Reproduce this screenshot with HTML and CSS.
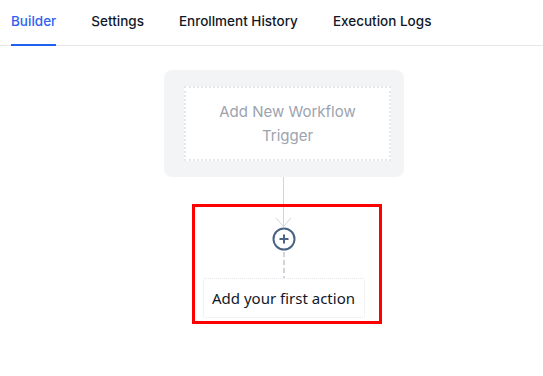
FILE: index.html
```html
<!DOCTYPE html>
<html>
<head>
<meta charset="utf-8">
<link rel="stylesheet" href="styles.css">
</head>
<body>
<nav class="tabs">
  <a class="tab active">Builder</a>
  <a class="tab">Settings</a>
  <a class="tab">Enrollment History</a>
  <a class="tab">Execution Logs</a>
</nav>
<main class="canvas">
  <div class="trigger-card">
    <div class="trigger-slot">Add New Workflow Trigger</div>
  </div>
  <div class="stem"></div>
  <section class="action-frame">
    <div class="action-col">
      <svg class="connector" width="162" height="71" viewBox="0 0 162 71">
        <line x1="80.5" y1="0" x2="80.5" y2="20" stroke="#d1d5db" stroke-width="1"/>
        <polyline points="73,11 80.5,19.5 88,11" fill="none" stroke="#d1d5db" stroke-width="1"/>
        <circle cx="81" cy="32" r="10.5" fill="#fff" stroke="#4a6385" stroke-width="2"/>
        <line x1="76.5" y1="32" x2="85.5" y2="32" stroke="#4a6385" stroke-width="2"/>
        <line x1="81" y1="27.5" x2="81" y2="36.5" stroke="#4a6385" stroke-width="2"/>
        <line x1="81" y1="45" x2="81" y2="71" stroke="#d1d5db" stroke-width="2" stroke-dasharray="5 3"/>
      </svg>
      <div class="action-box">Add your first action</div>
    </div>
  </section>
</main>
</body>
</html>
```
FILE: styles.css
```css
html, body {
  margin: 0;
  padding: 0;
  background: #ffffff;
}
body {
  font-family: Inter, "Noto Sans", sans-serif;
}
.tabs {
  display: flex;
  gap: 35px;
  padding-left: 11px;
  height: 46px;
  border-bottom: 1px solid #e5e7eb;
  box-sizing: border-box;
}
.tab {
  display: block;
  font-size: 13.5px;
  font-weight: 500;
  color: #111827;
  line-height: 20px;
  padding-top: 11px;
  height: 46px;
  box-sizing: border-box;
  border-bottom: 2px solid transparent;
  margin-bottom: -1px;
}
.tab.active {
  color: #2f62f0;
  border-bottom-color: #1f5ff3;
}
.canvas {
  margin-left: 164px;
  padding-top: 24px;
}
.trigger-card {
  width: 240px;
  height: 107px;
  box-sizing: border-box;
  background: #f3f4f6;
  border-radius: 8px;
  padding: 16px 12px 16px 20px;
}
.trigger-slot {
  width: 207px;
  height: 75px;
  box-sizing: border-box;
  background: #ffffff;
  border: 2px dotted #e5e7eb;
  display: flex;
  align-items: center;
  justify-content: center;
  text-align: center;
  padding: 0 28px;
  font-size: 15px;
  line-height: 24px;
  color: #9ca3af;
}
.stem {
  width: 1px;
  height: 27px;
  background: #d1d5db;
  margin-left: 119px;
}
.action-frame {
  margin-left: 28px;
  width: 190px;
  height: 120px;
  box-sizing: border-box;
  border: 3px solid #ff0000;
  padding-left: 8px;
}
.action-col {
  width: 162px;
  display: flex;
  flex-direction: column;
}
.connector {
  display: block;
}
.action-box {
  width: 162px;
  height: 40px;
  box-sizing: border-box;
  border: 1px dotted #e5e7eb;
  border-radius: 3px;
  padding-left: 8px;
  display: flex;
  align-items: center;
  font-family: "Noto Sans", "Open Sans", sans-serif;
  font-size: 15px;
  color: #111827;
}
```
